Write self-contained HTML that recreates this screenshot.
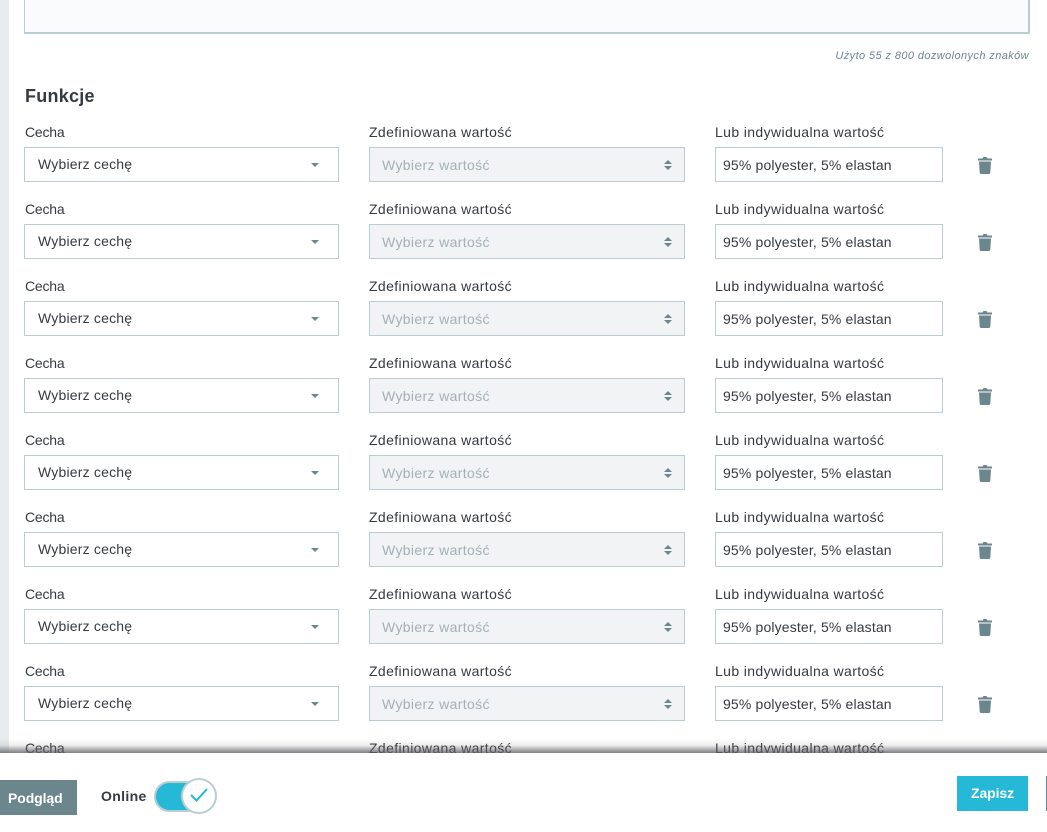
<!DOCTYPE html>
<html lang="pl"><head><meta charset="utf-8"><title>Funkcje</title>
<style>
html,body{margin:0;padding:0}
body{width:1047px;height:832px;position:relative;overflow:hidden;background:#fff;font-family:"Liberation Sans",sans-serif;font-size:14px;color:#363a41}
.a{position:absolute;white-space:nowrap}
.l{left:0;top:0;width:9px;height:753px;background:#eaebed;position:absolute}
.ta{position:absolute;left:24px;top:-10px;width:1003px;height:41px;background:#fafbfc;border-style:solid;border-width:1px 2px 2px 1px;border-color:#bbcdd2}
.row{position:absolute;left:0;width:1047px;height:77px}
.t{position:absolute;white-space:nowrap;line-height:20px}
.lb{top:0;letter-spacing:.38px}
.c{letter-spacing:-.2px;left:25px}
.w{left:38px;top:32px;letter-spacing:.2px}
.p{left:382px;top:33px;color:#a3b1b7;letter-spacing:.35px}
.v{left:723px;top:33px;letter-spacing:.15px}
.box{position:absolute;top:25px;height:33px;border:1px solid #bbcdd2;background:#fff}
.s1{left:24px;width:313px}.s2{left:369px;width:314px;background:#f1f3f4}.s3{left:715px;width:226px}
.car{position:absolute;left:311px;top:41px;width:0;height:0;border-left:4px solid transparent;border-right:4px solid transparent;border-top:4px solid #6c868e}
svg{position:absolute;display:block}
.st{left:663px;top:37px}
.tr{left:978px;top:34px}
.foot{position:absolute;left:0;top:753px;width:1047px;height:79px;background:#fff}
.sh{position:absolute;left:0;top:739px;width:1047px;height:14px;background:linear-gradient(to bottom,rgba(100,100,105,0),rgba(100,100,105,.12) 45%,rgba(95,95,100,.75) 95%)}
</style></head><body>
<div class="l"></div>
<div class="ta"></div>
<div class="a" style="right:18px;top:48px;font-size:11px;font-style:italic;color:#6c868e;letter-spacing:.4px;line-height:16px">Użyto 55 z 800 dozwolonych znaków</div>
<div class="a" style="left:25px;top:84px;font-size:18px;font-weight:bold;color:#363a41;line-height:24px;letter-spacing:.25px">Funkcje</div>

<div class="row" style="top:122px"><div class="t lb c">Cecha</div><div class="t lb" style="left:369px">Zdefiniowana wartość</div><div class="t lb" style="left:715px">Lub indywidualna wartość</div><div class="box s1"></div><div class="t w">Wybierz cechę</div><div class="car"></div><div class="box s2"></div><div class="t p">Wybierz wartość</div><svg class="st" width="10" height="13" viewBox="0 0 10 13"><path d="M5 1 9 5H1ZM5 11 1 7H9Z" fill="#6c868e"/></svg><div class="box s3"></div><div class="t v">95% polyester, 5% elastan</div><svg class="tr" width="14" height="18" viewBox="0 0 14 18"><path d="M0 2.5H4.5L5.5 1H8.5L9.5 2.5H14V4.5H0ZM1 5.5H13L12.3 16.5Q12.2 18 10.8 18H3.2Q1.8 18 1.7 16.5Z" fill="#6c868e"/></svg></div>
<div class="row" style="top:199px"><div class="t lb c">Cecha</div><div class="t lb" style="left:369px">Zdefiniowana wartość</div><div class="t lb" style="left:715px">Lub indywidualna wartość</div><div class="box s1"></div><div class="t w">Wybierz cechę</div><div class="car"></div><div class="box s2"></div><div class="t p">Wybierz wartość</div><svg class="st" width="10" height="13" viewBox="0 0 10 13"><path d="M5 1 9 5H1ZM5 11 1 7H9Z" fill="#6c868e"/></svg><div class="box s3"></div><div class="t v">95% polyester, 5% elastan</div><svg class="tr" width="14" height="18" viewBox="0 0 14 18"><path d="M0 2.5H4.5L5.5 1H8.5L9.5 2.5H14V4.5H0ZM1 5.5H13L12.3 16.5Q12.2 18 10.8 18H3.2Q1.8 18 1.7 16.5Z" fill="#6c868e"/></svg></div>
<div class="row" style="top:276px"><div class="t lb c">Cecha</div><div class="t lb" style="left:369px">Zdefiniowana wartość</div><div class="t lb" style="left:715px">Lub indywidualna wartość</div><div class="box s1"></div><div class="t w">Wybierz cechę</div><div class="car"></div><div class="box s2"></div><div class="t p">Wybierz wartość</div><svg class="st" width="10" height="13" viewBox="0 0 10 13"><path d="M5 1 9 5H1ZM5 11 1 7H9Z" fill="#6c868e"/></svg><div class="box s3"></div><div class="t v">95% polyester, 5% elastan</div><svg class="tr" width="14" height="18" viewBox="0 0 14 18"><path d="M0 2.5H4.5L5.5 1H8.5L9.5 2.5H14V4.5H0ZM1 5.5H13L12.3 16.5Q12.2 18 10.8 18H3.2Q1.8 18 1.7 16.5Z" fill="#6c868e"/></svg></div>
<div class="row" style="top:353px"><div class="t lb c">Cecha</div><div class="t lb" style="left:369px">Zdefiniowana wartość</div><div class="t lb" style="left:715px">Lub indywidualna wartość</div><div class="box s1"></div><div class="t w">Wybierz cechę</div><div class="car"></div><div class="box s2"></div><div class="t p">Wybierz wartość</div><svg class="st" width="10" height="13" viewBox="0 0 10 13"><path d="M5 1 9 5H1ZM5 11 1 7H9Z" fill="#6c868e"/></svg><div class="box s3"></div><div class="t v">95% polyester, 5% elastan</div><svg class="tr" width="14" height="18" viewBox="0 0 14 18"><path d="M0 2.5H4.5L5.5 1H8.5L9.5 2.5H14V4.5H0ZM1 5.5H13L12.3 16.5Q12.2 18 10.8 18H3.2Q1.8 18 1.7 16.5Z" fill="#6c868e"/></svg></div>
<div class="row" style="top:430px"><div class="t lb c">Cecha</div><div class="t lb" style="left:369px">Zdefiniowana wartość</div><div class="t lb" style="left:715px">Lub indywidualna wartość</div><div class="box s1"></div><div class="t w">Wybierz cechę</div><div class="car"></div><div class="box s2"></div><div class="t p">Wybierz wartość</div><svg class="st" width="10" height="13" viewBox="0 0 10 13"><path d="M5 1 9 5H1ZM5 11 1 7H9Z" fill="#6c868e"/></svg><div class="box s3"></div><div class="t v">95% polyester, 5% elastan</div><svg class="tr" width="14" height="18" viewBox="0 0 14 18"><path d="M0 2.5H4.5L5.5 1H8.5L9.5 2.5H14V4.5H0ZM1 5.5H13L12.3 16.5Q12.2 18 10.8 18H3.2Q1.8 18 1.7 16.5Z" fill="#6c868e"/></svg></div>
<div class="row" style="top:507px"><div class="t lb c">Cecha</div><div class="t lb" style="left:369px">Zdefiniowana wartość</div><div class="t lb" style="left:715px">Lub indywidualna wartość</div><div class="box s1"></div><div class="t w">Wybierz cechę</div><div class="car"></div><div class="box s2"></div><div class="t p">Wybierz wartość</div><svg class="st" width="10" height="13" viewBox="0 0 10 13"><path d="M5 1 9 5H1ZM5 11 1 7H9Z" fill="#6c868e"/></svg><div class="box s3"></div><div class="t v">95% polyester, 5% elastan</div><svg class="tr" width="14" height="18" viewBox="0 0 14 18"><path d="M0 2.5H4.5L5.5 1H8.5L9.5 2.5H14V4.5H0ZM1 5.5H13L12.3 16.5Q12.2 18 10.8 18H3.2Q1.8 18 1.7 16.5Z" fill="#6c868e"/></svg></div>
<div class="row" style="top:584px"><div class="t lb c">Cecha</div><div class="t lb" style="left:369px">Zdefiniowana wartość</div><div class="t lb" style="left:715px">Lub indywidualna wartość</div><div class="box s1"></div><div class="t w">Wybierz cechę</div><div class="car"></div><div class="box s2"></div><div class="t p">Wybierz wartość</div><svg class="st" width="10" height="13" viewBox="0 0 10 13"><path d="M5 1 9 5H1ZM5 11 1 7H9Z" fill="#6c868e"/></svg><div class="box s3"></div><div class="t v">95% polyester, 5% elastan</div><svg class="tr" width="14" height="18" viewBox="0 0 14 18"><path d="M0 2.5H4.5L5.5 1H8.5L9.5 2.5H14V4.5H0ZM1 5.5H13L12.3 16.5Q12.2 18 10.8 18H3.2Q1.8 18 1.7 16.5Z" fill="#6c868e"/></svg></div>
<div class="row" style="top:661px"><div class="t lb c">Cecha</div><div class="t lb" style="left:369px">Zdefiniowana wartość</div><div class="t lb" style="left:715px">Lub indywidualna wartość</div><div class="box s1"></div><div class="t w">Wybierz cechę</div><div class="car"></div><div class="box s2"></div><div class="t p">Wybierz wartość</div><svg class="st" width="10" height="13" viewBox="0 0 10 13"><path d="M5 1 9 5H1ZM5 11 1 7H9Z" fill="#6c868e"/></svg><div class="box s3"></div><div class="t v">95% polyester, 5% elastan</div><svg class="tr" width="14" height="18" viewBox="0 0 14 18"><path d="M0 2.5H4.5L5.5 1H8.5L9.5 2.5H14V4.5H0ZM1 5.5H13L12.3 16.5Q12.2 18 10.8 18H3.2Q1.8 18 1.7 16.5Z" fill="#6c868e"/></svg></div>
<div class="row" style="top:738px"><div class="t lb c">Cecha</div><div class="t lb" style="left:369px">Zdefiniowana wartość</div><div class="t lb" style="left:715px">Lub indywidualna wartość</div></div>

<div class="sh"></div>
<div class="foot"></div>
<div class="a" style="left:0;top:780px;width:77px;height:35px;background:#6c868e"></div>
<div class="a" style="left:8px;top:780px;color:#fff;font-weight:bold;font-size:14px;line-height:36px;letter-spacing:-.1px">Podgląd</div>
<div class="a" style="left:101px;top:786px;font-weight:bold;font-size:14px;line-height:20px;color:#363a41;letter-spacing:.35px">Online</div>
<div class="a" style="left:154px;top:781px;width:46px;height:27px;background:#25b9d7;border:2px solid #bbcdd2;border-radius:16px"></div>
<div class="a" style="left:181px;top:778px;width:32px;height:32px;background:#fff;border:2px solid #bbcdd2;border-radius:50%"></div>
<svg style="left:189px;top:786px" width="20" height="18" viewBox="0 0 20 18"><path d="M2 9 7.5 14.5 18 3" fill="none" stroke="#25b9d7" stroke-width="2"/></svg>
<div class="a" style="left:957px;top:776px;width:71px;height:35px;background:#25b9d7;color:#fff;font-weight:bold;font-size:14px;line-height:35px;text-align:center;letter-spacing:-.1px">Zapisz</div>
<div class="a" style="left:1046px;top:776px;width:1px;height:35px;background:#6c868e"></div>
</body></html>
